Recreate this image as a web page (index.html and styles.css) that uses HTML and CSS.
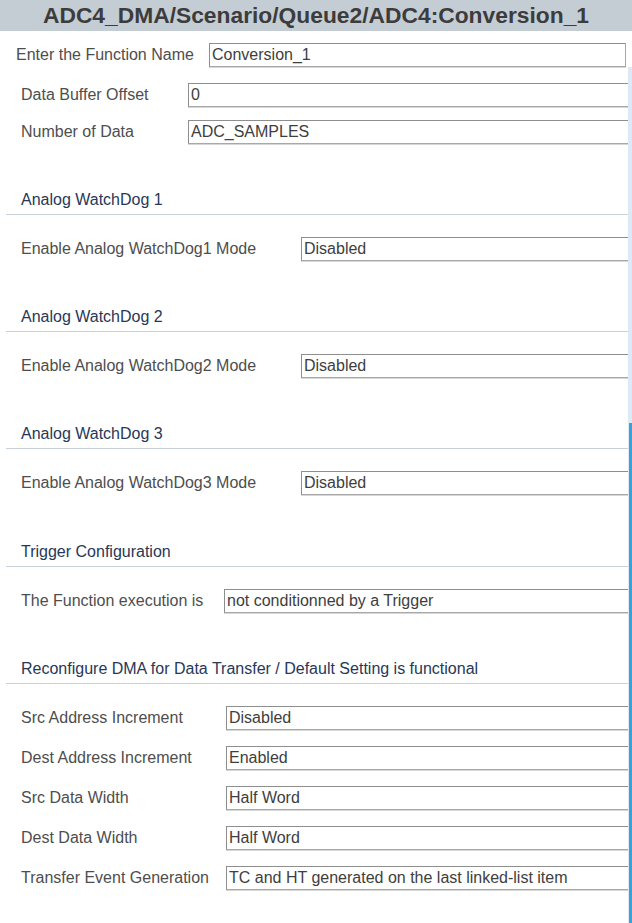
FILE: index.html
```html
<!DOCTYPE html>
<html lang="en">
<head>
  <meta charset="UTF-8">
  <title>ADC4:Conversion_1</title>
  <link rel="stylesheet" href="styles.css">
</head>
<body>
  <div class="title-bar">ADC4_DMA/Scenario/Queue2/ADC4:Conversion_1</div>

  <div class="name-row">
    <label class="label">Enter the Function Name</label>
    <div class="field boxed">Conversion_1</div>
  </div>

  <div class="panel">
    <div class="panel-body">

      <div class="group group-data">
        <span class="label">Data Buffer Offset</span>
        <div class="field">0</div>
        <span class="label">Number of Data</span>
        <div class="field">ADC_SAMPLES</div>
      </div>

      <section class="section">
        <h2 class="section-header">Analog WatchDog 1</h2>
        <div class="group group-wd">
          <span class="label">Enable Analog WatchDog1 Mode</span>
          <div class="field">Disabled</div>
        </div>
      </section>

      <section class="section">
        <h2 class="section-header">Analog WatchDog 2</h2>
        <div class="group group-wd">
          <span class="label">Enable Analog WatchDog2 Mode</span>
          <div class="field">Disabled</div>
        </div>
      </section>

      <section class="section">
        <h2 class="section-header">Analog WatchDog 3</h2>
        <div class="group group-wd">
          <span class="label">Enable Analog WatchDog3 Mode</span>
          <div class="field">Disabled</div>
        </div>
      </section>

      <section class="section section-trigger">
        <h2 class="section-header">Trigger Configuration</h2>
        <div class="group group-trigger">
          <span class="label">The Function execution is</span>
          <div class="field">not conditionned by a Trigger</div>
        </div>
      </section>

      <section class="section">
        <h2 class="section-header">Reconfigure DMA for Data Transfer / Default Setting is functional</h2>
        <div class="group group-dma">
          <span class="label">Src Address Increment</span>
          <div class="field">Disabled</div>
          <span class="label">Dest Address Increment</span>
          <div class="field">Enabled</div>
          <span class="label">Src Data Width</span>
          <div class="field">Half Word</div>
          <span class="label">Dest Data Width</span>
          <div class="field">Half Word</div>
          <span class="label">Transfer Event Generation</span>
          <div class="field">TC and HT generated on the last linked-list item</div>
        </div>
      </section>

    </div>

    <!-- vertical scrollbar of the settings panel -->
    <div class="scrollbar"><div class="scroll-thumb"></div></div>
  </div>
</body>
</html>
```

FILE: styles.css
```css
* {
  box-sizing: border-box;
  margin: 0;
  padding: 0;
}

body {
  background: #ffffff;
  font-family: "Liberation Sans", Arial, sans-serif;
  font-size: 16px;
  color: #4e4e4e;
  height: 923px;
  overflow: hidden;
  display: flex;
  flex-direction: column;
}

.title-bar {
  background-color: #c4ccd4;
  color: #3c3c3c;
  font-weight: bold;
  font-size: 22.8px;
  height: 31px;
  line-height: 31px;
  text-align: center;
  flex-shrink: 0;
}

.name-row {
  display: grid;
  grid-template-columns: 193px 417px;
  align-items: center;
  align-content: start;
  padding: 12px 0 0 16px;
  height: 36px;
  flex-shrink: 0;
}

.label {
  color: #4e4e4e;
  line-height: 20px;
  white-space: nowrap;
}

.field {
  height: 24px;
  line-height: 22px;
  padding-left: 2px;
  color: #3e3e3e;
  border: 1px solid #a8a8a8;
  border-top-color: #8e8e8e;
  border-left-color: #8e8e8e;
  border-right: none;
  box-shadow: 0 1px 0 #d6d6d6;
  white-space: nowrap;
  overflow: hidden;
}

.field.boxed {
  border-right: 1px solid #a8a8a8;
}

/* settings panel with its own scrollbar */
.panel {
  flex: 1;
  display: flex;
  min-height: 0;
}

.panel-body {
  flex: 1;
  overflow: hidden;
  padding-top: 16px;
}

.scrollbar {
  width: 4px;
  background: #dce9f6;
  display: flex;
  flex-direction: column;
  justify-content: flex-end;
  align-items: flex-end;
}

.scroll-thumb {
  width: 3px;
  height: 500px;
  background: #3aa0da;
}

.group {
  display: grid;
  align-items: center;
  padding-left: 21px;
}

.group-data {
  grid-template-columns: 167px 1fr;
  row-gap: 13px;
}

.group-wd {
  grid-template-columns: 280px 1fr;
}

.group-trigger {
  grid-template-columns: 203px 1fr;
}

.group-dma {
  grid-template-columns: 205px 1fr;
  row-gap: 16px;
}

.section {
  margin-top: 46px;
}

.section-trigger {
  margin-top: 47px;
}

.section-header {
  font-size: 16px;
  font-weight: normal;
  color: #273858;
  line-height: 20px;
  margin-left: 6px;
  padding: 0 0 4px 15px;
  border-bottom: 1px solid #c9d0d8;
  margin-bottom: 22px;
  white-space: nowrap;
}
```
